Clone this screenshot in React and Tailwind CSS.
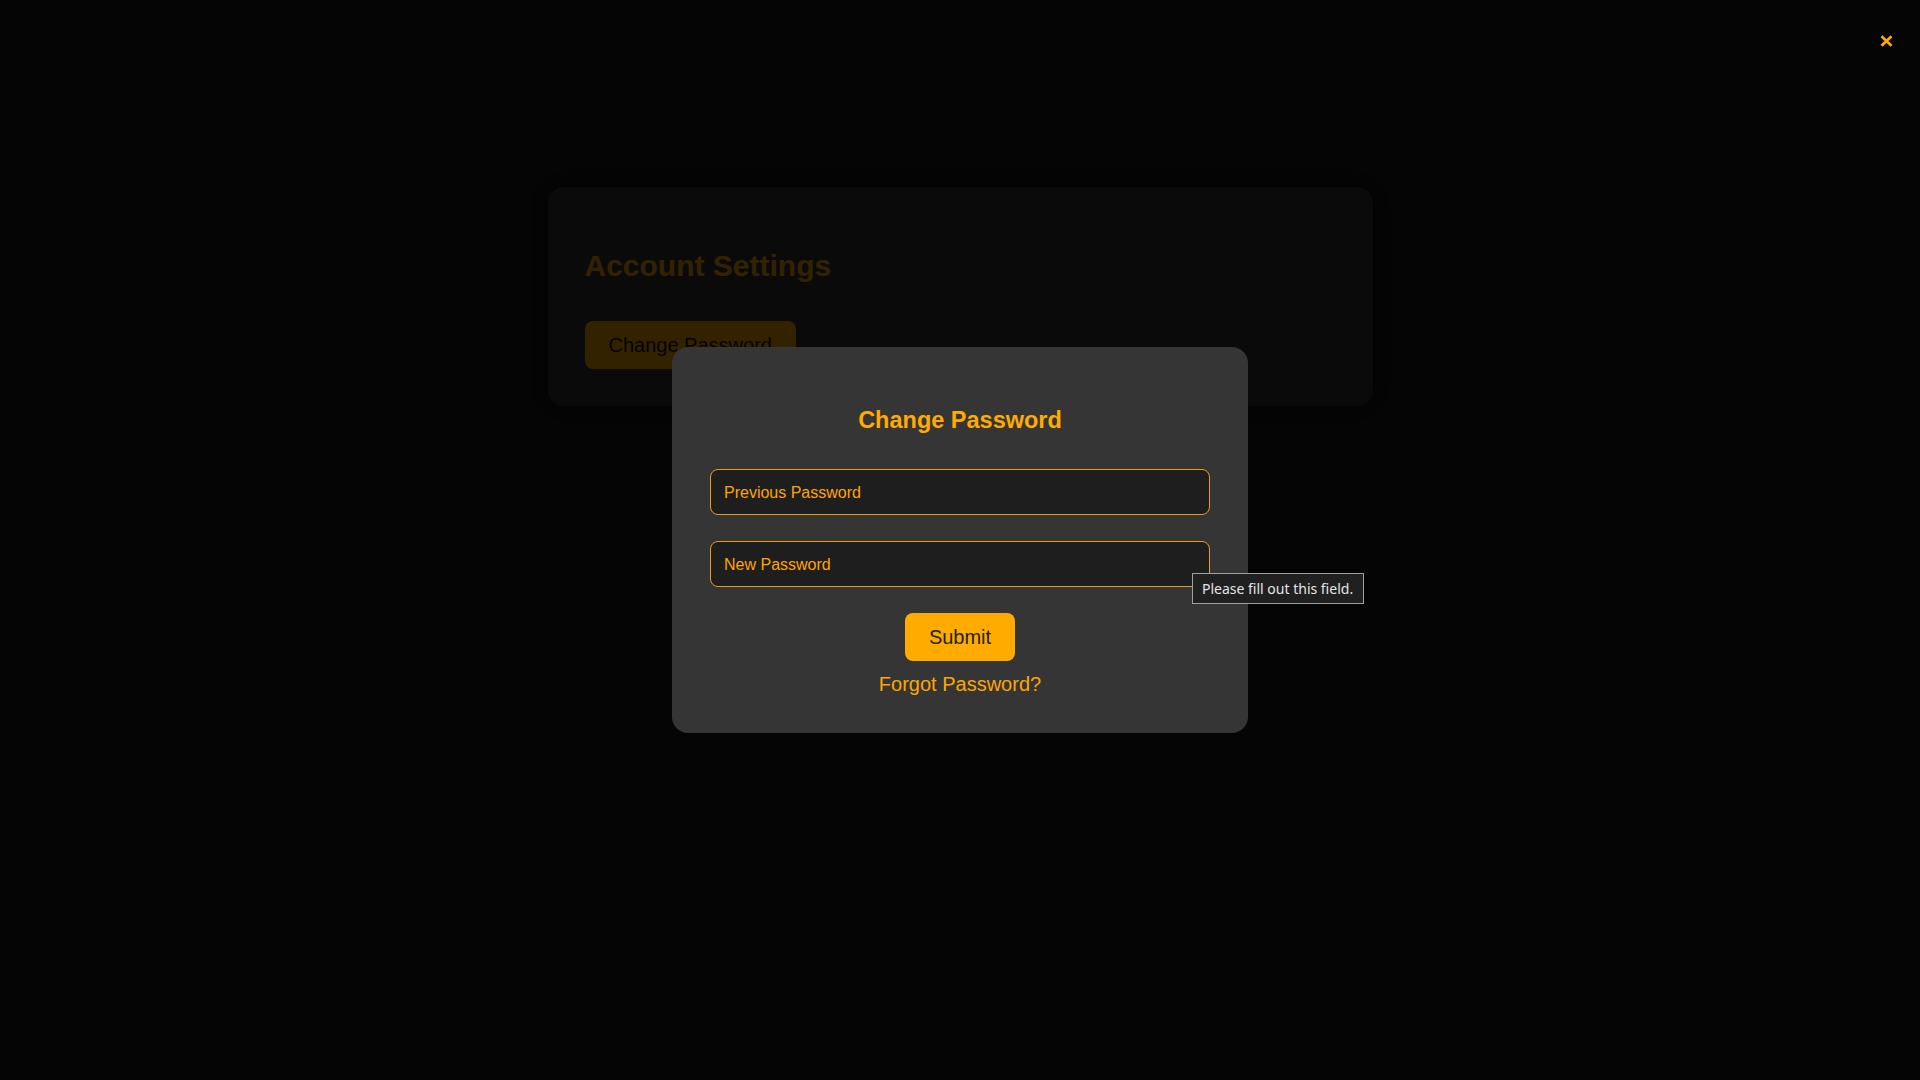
export default function App() {
  return (
    <div className="relative min-h-screen bg-[#1a1a1a] font-['Liberation_Sans',Arial,sans-serif]">
      {/* Page underneath the modal */}
      <div className="flex justify-center pt-[187px]">
        <div className="h-[219px] w-[825px] rounded-2xl bg-[#363636] px-[37px] pt-[61px] shadow-[0_0_24px_rgba(0,0,0,0.6)]">
          <h2 className="text-3xl leading-9 font-bold text-[#ffab00]">Account Settings</h2>
          <button className="mt-[37px] h-12 rounded-lg bg-[#ffab00] px-6 text-xl text-[#111]">
            Change Password
          </button>
        </div>
      </div>

      {/* Overlay */}
      <div className="fixed inset-0 flex items-center justify-center bg-black/80">
        <button className="absolute top-[35px] right-[27px] text-[#ffab00]" aria-label="Close">
          <svg width="13" height="12" viewBox="0 0 13 12" fill="none">
            <path d="M1.5 1.2 L11.5 10.8 M11.5 1.2 L1.5 10.8" stroke="currentColor" strokeWidth="2.6" />
          </svg>
        </button>

        <div className="flex h-[386px] w-[576px] flex-col items-center rounded-2xl bg-[#353535] px-[38px] pt-[57px]">
          <h3 className="text-[23.5px] leading-8 font-bold text-[#ffab00]">Change Password</h3>

          <input
            type="password"
            placeholder="Previous Password"
            className="mt-[33px] h-[46px] w-[500px] rounded-lg border border-[#e6a10f] bg-[#1e1e1e] px-[13px] pt-[2px] text-base text-[#ffab00] outline-none placeholder:text-[#ffa500]"
          />
          <div className="relative mt-[26px]">
            <input
              type="password"
              placeholder="New Password"
              className="h-[46px] w-[500px] rounded-lg border border-[#e6a10f] bg-[#1e1e1e] px-[13px] pt-[2px] text-base text-[#ffab00] outline-none placeholder:text-[#ffa500]"
            />
            {/* Native validation bubble */}
            <div className="absolute top-[32px] left-[482px] flex h-[31px] w-[172px] items-center border border-[#a0a0a0] bg-[#202020] pl-[9px] font-['Noto_Sans',sans-serif] text-[14px] whitespace-nowrap text-[#e4e4e4]">
              Please fill out this field.
            </div>
          </div>

          <button className="mt-[26px] h-12 rounded-lg bg-[#ffab00] px-6 text-xl text-[#222]">Submit</button>
          <a href="#" className="mt-[9px] text-xl leading-7 text-[#ffa500]">
            Forgot Password?
          </a>
        </div>
      </div>
    </div>
  );
}
